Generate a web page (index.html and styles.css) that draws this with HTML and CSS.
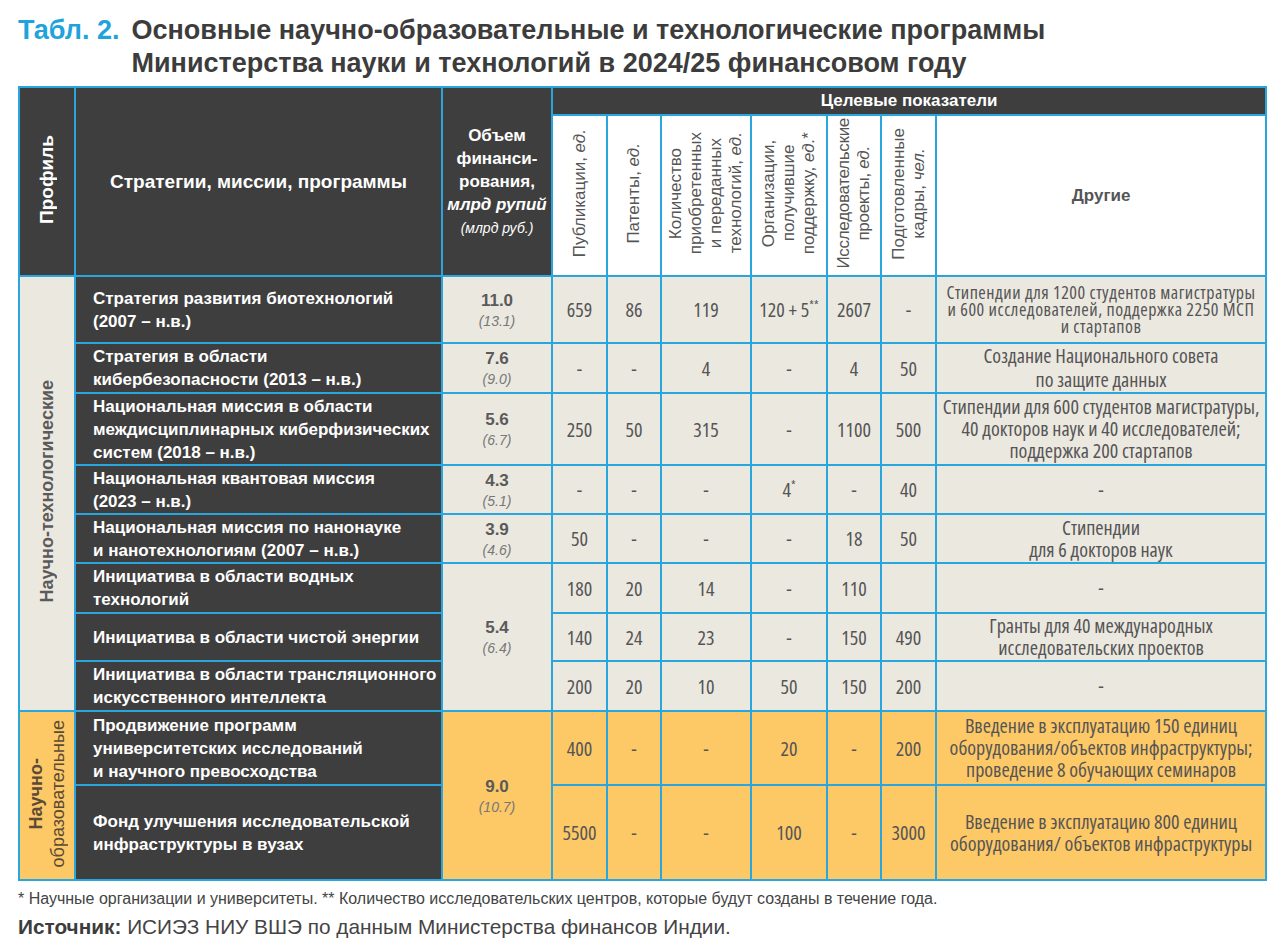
FILE: index.html
```html
<!DOCTYPE html>
<html lang="ru">
<head>
<meta charset="utf-8">
<title>Табл. 2</title>
<link rel="stylesheet" href="styles.css">
</head>
<body>
<div class="page">
  <h1 class="title"><span class="title-label">Табл. 2.</span><span class="title-text">Основные научно-образовательные и технологические программы<br>Министерства науки и технологий в 2024/25 финансовом году</span></h1>
  <table class="grid">
    <colgroup>
      <col class="c-prof"><col class="c-strat"><col class="c-fund"><col class="c-pub"><col class="c-pat"><col class="c-qty"><col class="c-org"><col class="c-res"><col class="c-cad"><col class="c-oth">
    </colgroup>
    <thead>
      <tr class="h1">
        <th rowspan="2" class="dark"><div class="vert vert-head">Профиль</div></th>
        <th rowspan="2" class="dark hstrat">Стратегии, миссии, программы</th>
        <th rowspan="2" class="dark hfund">Объем<br>финанси-<br>рования,<br><i>млрд рупий</i><br><span class="rub">(млрд руб.)</span></th>
        <th colspan="7" class="dark htarget">Целевые показатели</th>
      </tr>
      <tr class="h2">
        <th class="white"><div class="vert">Публикации, <i>ед.</i></div></th>
        <th class="white"><div class="vert">Патенты, <i>ед.</i></div></th>
        <th class="white"><div class="vert">Количество<br>приобретенных<br>и переданных<br>технологий, <i>ед.</i></div></th>
        <th class="white"><div class="vert">Организации,<br>получившие<br>поддержку, <i>ед.</i>*</div></th>
        <th class="white"><div class="vert tight">Исследовательские<br>проекты, <i>ед.</i></div></th>
        <th class="white"><div class="vert">Подготовленные<br>кадры, <i>чел.</i></div></th>
        <th class="white hother">Другие</th>
      </tr>
    </thead>
    <tbody>
      <tr class="r1 beige">
        <td rowspan="8" class="prof"><div class="vert prof-tech">Научно-технологические</div></td>
        <td class="dark strat">Стратегия развития биотехнологий<br>(2007 – н.в.)</td>
        <td class="fund"><b>11.0</b><span class="rubv">(13.1)</span></td>
        <td class="num">659</td><td class="num">86</td><td class="num">119</td><td class="num">120 + 5<sup>**</sup></td><td class="num">2607</td><td class="num">-</td>
        <td class="oth squeeze">Стипендии для 1200 студентов магистратуры<br>и 600 исследователей, поддержка 2250 МСП<br>и стартапов</td>
      </tr>
      <tr class="r2 beige">
        <td class="dark strat">Стратегия в области<br>кибербезопасности (2013 – н.в.)</td>
        <td class="fund"><b>7.6</b><span class="rubv">(9.0)</span></td>
        <td class="num">-</td><td class="num">-</td><td class="num">4</td><td class="num">-</td><td class="num">4</td><td class="num">50</td>
        <td class="oth lh24">Создание Национального совета<br>по защите данных</td>
      </tr>
      <tr class="r3 beige">
        <td class="dark strat">Национальная миссия в области<br>междисциплинарных киберфизических<br>систем (2018 – н.в.)</td>
        <td class="fund"><b>5.6</b><span class="rubv">(6.7)</span></td>
        <td class="num">250</td><td class="num">50</td><td class="num">315</td><td class="num">-</td><td class="num">1100</td><td class="num">500</td>
        <td class="oth">Стипендии для 600 студентов магистратуры,<br>40 докторов наук и 40 исследователей;<br>поддержка 200 стартапов</td>
      </tr>
      <tr class="r4 beige">
        <td class="dark strat">Национальная квантовая миссия<br>(2023 – н.в.)</td>
        <td class="fund"><b>4.3</b><span class="rubv">(5.1)</span></td>
        <td class="num">-</td><td class="num">-</td><td class="num">-</td><td class="num">4<sup>*</sup></td><td class="num">-</td><td class="num">40</td>
        <td class="oth">-</td>
      </tr>
      <tr class="r5 beige">
        <td class="dark strat">Национальная миссия по нанонауке<br>и нанотехнологиям (2007 – н.в.)</td>
        <td class="fund"><b>3.9</b><span class="rubv">(4.6)</span></td>
        <td class="num">50</td><td class="num">-</td><td class="num">-</td><td class="num">-</td><td class="num">18</td><td class="num">50</td>
        <td class="oth">Стипендии<br>для 6 докторов наук</td>
      </tr>
      <tr class="r6 beige">
        <td class="dark strat">Инициатива в области водных<br>технологий</td>
        <td rowspan="3" class="fund"><b>5.4</b><span class="rubv">(6.4)</span></td>
        <td class="num">180</td><td class="num">20</td><td class="num">14</td><td class="num">-</td><td class="num">110</td><td class="num"></td>
        <td class="oth">-</td>
      </tr>
      <tr class="r7 beige">
        <td class="dark strat">Инициатива в области чистой энергии</td>
        <td class="num">140</td><td class="num">24</td><td class="num">23</td><td class="num">-</td><td class="num">150</td><td class="num">490</td>
        <td class="oth">Гранты для 40 международных<br>исследовательских проектов</td>
      </tr>
      <tr class="r8 beige">
        <td class="dark strat">Инициатива в области трансляционного<br>искусственного интеллекта</td>
        <td class="num">200</td><td class="num">20</td><td class="num">10</td><td class="num">50</td><td class="num">150</td><td class="num">200</td>
        <td class="oth">-</td>
      </tr>
      <tr class="r9 orange">
        <td rowspan="2" class="prof"><div class="vert prof-edu"><b>Научно-</b><br>образовательные</div></td>
        <td class="dark strat">Продвижение программ<br>университетских исследований<br>и научного превосходства</td>
        <td rowspan="2" class="fund"><b>9.0</b><span class="rubv">(10.7)</span></td>
        <td class="num">400</td><td class="num">-</td><td class="num">-</td><td class="num">20</td><td class="num">-</td><td class="num">200</td>
        <td class="oth">Введение в эксплуатацию 150 единиц<br>оборудования/объектов инфраструктуры;<br>проведение 8 обучающих семинаров</td>
      </tr>
      <tr class="r10 orange">
        <td class="dark strat">Фонд улучшения исследовательской<br>инфраструктуры в вузах</td>
        <td class="num">5500</td><td class="num">-</td><td class="num">-</td><td class="num">100</td><td class="num">-</td><td class="num">3000</td>
        <td class="oth">Введение в эксплуатацию 800 единиц<br>оборудования/ объектов инфраструктуры</td>
      </tr>
    </tbody>
  </table>
  <p class="note">* Научные организации и университеты. ** Количество исследовательских центров, которые будут созданы в течение года.</p>
  <p class="source"><b>Источник:</b> ИСИЭЗ НИУ ВШЭ по данным Министерства финансов Индии.</p>
</div>
</body>
</html>
```

FILE: styles.css
```css
* { box-sizing: border-box; }
html, body { margin: 0; padding: 0; background: #ffffff; }
body { font-family: "Liberation Sans", Arial, sans-serif; color: #4f4f4f; }

.page { padding: 14px 0 0 18px; width: 1280px; }

.title {
  margin: 0 0 6px;
  display: flex;
  gap: 12px;
  font-size: 27px;
  line-height: 33px;
  font-weight: bold;
  color: #3c3c3c;
}
.title-label {
  color: #1fa3dc;
  flex: 0 0 101px;
  white-space: nowrap;
}
.title-text { white-space: nowrap; }

.grid {
  border-collapse: collapse;
  table-layout: fixed;
  width: 1247px;
}
.grid th, .grid td {
  border: 2px solid #2aa6de;
  padding: 0;
  text-align: center;
  vertical-align: middle;
}
.c-prof { width: 56px; }
.c-strat { width: 367px; }
.c-fund { width: 110px; }
.c-pub { width: 55px; }
.c-pat { width: 54px; }
.c-qty { width: 90px; }
.c-org { width: 76px; }
.c-res { width: 54px; }
.c-cad { width: 55px; }
.c-oth { width: 330px; }

.h1 { height: 28px; }
.h2 { height: 161px; }
.r1 { height: 67px; }
.r2 { height: 49px; }
.r3 { height: 72px; }
.r4 { height: 49px; }
.r5 { height: 49px; }
.r6 { height: 50px; }
.r7 { height: 48px; }
.r8 { height: 50px; }
.r9 { height: 74px; }
.r10 { height: 95px; }

.dark { background: #3e3e3e; color: #ffffff; }
.white { background: #ffffff; }
.beige td { background: #ebe8e0; }
.orange td { background: #fdc866; }
.beige td.dark, .orange td.dark { background: #3e3e3e; }

.grid th { font-weight: bold; }
.hstrat { font-size: 19px; }
.hfund { font-size: 17px; line-height: 23px; }
.hfund .rub {
  font-size: 14px;
  font-weight: normal;
  font-style: italic;
}
.htarget { font-size: 17px; }
.hother { font-size: 17px; color: #555555; }

.vert {
  display: inline-block;
  writing-mode: vertical-rl;
  transform: rotate(180deg);
  text-align: center;
  font-size: 17px;
  line-height: 20px;
  font-weight: normal;
  color: #555555;
  white-space: nowrap;
}
.vert.tight { letter-spacing: -0.3px; }
.vert-head { font-size: 19px; font-weight: bold; color: #ffffff; }
.prof-tech { font-size: 18px; font-weight: bold; color: #5a5a5a; }
.prof-edu { font-size: 18px; line-height: 22px; color: #5a4a36; }

.strat {
  text-align: left !important;
  padding-left: 17px !important;
  font-size: 17px;
  line-height: 23px;
  font-weight: bold;
  white-space: nowrap;
}

.fund { color: #5a5a5a; }
.fund b { display: block; font-size: 17px; line-height: 22px; }
.fund .rubv {
  display: block;
  font-size: 14px;
  line-height: 18px;
  font-style: italic;
  color: #777777;
}

.num {
  font-family: "Open Sans", sans-serif;
  font-stretch: 75%;
  font-size: 20px;
  color: #555555;
  white-space: nowrap;
}
.num sup { font-size: 12px; vertical-align: 7px; line-height: 0; }

.oth {
  font-family: "Open Sans", sans-serif;
  font-stretch: 75%;
  font-size: 20px;
  line-height: 22px;
  color: #555555;
  white-space: nowrap;
}
.oth.lh24 { line-height: 24px; }
.oth.squeeze { font-size: 18px; line-height: 17px; letter-spacing: 0.5px; }

.note {
  margin: 8px 0 0;
  font-size: 16px;
  line-height: 20px;
  color: #444444;
}
.source {
  margin: 6px 0 0;
  font-size: 20.8px;
  line-height: 24px;
  color: #444444;
}
.source b { color: #3c3c3c; }
```
